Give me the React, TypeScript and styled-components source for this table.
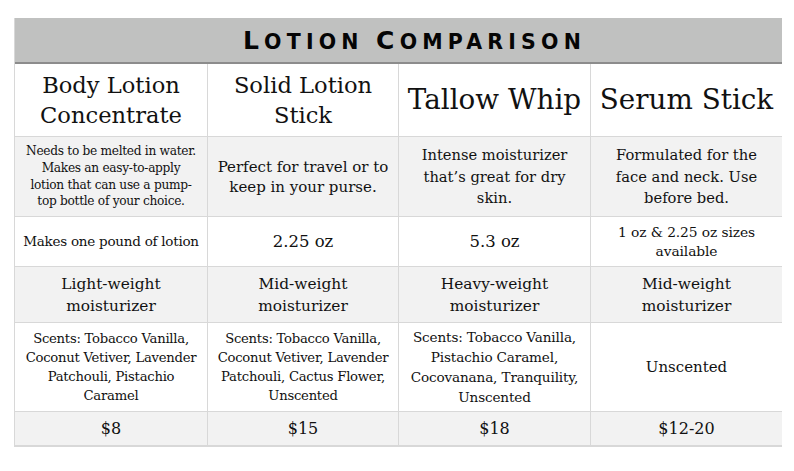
import React from "react";
import styled, { createGlobalStyle } from "styled-components";

const Global = createGlobalStyle`
  html, body { margin: 0; padding: 0; background: #ffffff; }
  body { font-family: "DejaVu Serif", serif; color: #111111; }
`;

const Page = styled.div`
  width: 794px;
  height: 471px;
  padding: 18px 13px 0 14px;
  box-sizing: border-box;
`;

const Table = styled.div`
  display: grid;
  grid-template-columns: 193px 191px 192px 191px;
  grid-template-rows: 46px 73px 80px 50px 56px 89px 34px;
  border-left: 1px solid #d8d8d8;
  border-right: 1px solid #d8d8d8;
  border-bottom: 1px solid #d8d8d8;
  width: 768px;
  box-sizing: border-box;
`;

const TitleBar = styled.div`
  grid-column: 1 / -1;
  background: #c0c1c0;
  border-bottom: 2px solid #8c8c8c;
  display: flex;
  align-items: center;
  justify-content: center;
  padding-left: 32px;
  padding-top: 1px;
`;

const Title = styled.h1`
  margin: 0;
  font-family: "DejaVu Sans", "Liberation Sans", sans-serif;
  font-weight: 700;
  font-size: 20.5px;
  letter-spacing: 5.2px;
  text-transform: uppercase;
  color: #050505;
  line-height: 1;
  white-space: nowrap;
`;

const Initial = styled.span`
  font-size: 25px;
`;

const Cell = styled.div<{ $shade?: boolean; $size: number; $lh?: number; $ls?: number; $last?: boolean }>`
  display: flex;
  align-items: center;
  justify-content: center;
  text-align: center;
  font-family: "DejaVu Serif", serif;
  color: #111111;
  background: ${(p) => (p.$shade ? "#f2f2f2" : "#ffffff")};
  border-right: ${(p) => (p.$last ? "none" : "1px solid #d8d8d8")};
  border-bottom: 1px solid #d8d8d8;
  font-size: ${(p) => p.$size}px;
  line-height: ${(p) => (p.$lh ? `${p.$lh}px` : "1.2")};
  letter-spacing: ${(p) => p.$ls ?? 0}px;
  padding: 0 2px;
  box-sizing: border-box;
  overflow: hidden;
  white-space: nowrap;
`;

type CellData = { text: React.ReactNode; size: number; lh?: number; ls?: number };
type Row = { shade?: boolean; cells: CellData[] };

const rows: Row[] = [
  {
    cells: [
      { text: <>Body Lotion<br />Concentrate</>, size: 22.6, lh: 30 },
      { text: <>Solid Lotion<br />Stick</>, size: 22.6, lh: 30 },
      { text: "Tallow Whip", size: 27.8 },
      { text: "Serum Stick", size: 27.8 },
    ],
  },
  {
    shade: true,
    cells: [
      {
        text: <>Needs to be melted in water.<br />Makes an easy-to-apply<br />lotion that can use a pump-<br />top bottle of your choice.</>,
        size: 12.2,
        lh: 16.7,
        ls: -0.3,
      },
      { text: <>Perfect for travel or to<br />keep in your purse.</>, size: 15, lh: 20 },
      { text: <>Intense moisturizer<br />that’s great for dry<br />skin.</>, size: 14.7, lh: 21.5 },
      { text: <>Formulated for the<br />face and neck. Use<br />before bed.</>, size: 14.7, lh: 21.5 },
    ],
  },
  {
    cells: [
      { text: "Makes one pound of lotion", size: 13.5, ls: -0.25 },
      { text: "2.25 oz", size: 16.5 },
      { text: "5.3 oz", size: 16.5 },
      { text: <>1 oz &amp; 2.25 oz sizes<br />available</>, size: 13.8, lh: 19, ls: -0.1 },
    ],
  },
  {
    shade: true,
    cells: [
      { text: <>Light-weight<br />moisturizer</>, size: 15.4, lh: 22 },
      { text: <>Mid-weight<br />moisturizer</>, size: 15.4, lh: 22 },
      { text: <>Heavy-weight<br />moisturizer</>, size: 15.4, lh: 22 },
      { text: <>Mid-weight<br />moisturizer</>, size: 15.4, lh: 22 },
    ],
  },
  {
    cells: [
      { text: <>Scents: Tobacco Vanilla,<br />Coconut Vetiver, Lavender<br />Patchouli, Pistachio<br />Caramel</>, size: 13.2, lh: 19, ls: -0.25 },
      { text: <>Scents: Tobacco Vanilla,<br />Coconut Vetiver, Lavender<br />Patchouli, Cactus Flower,<br />Unscented</>, size: 13.2, lh: 19, ls: -0.25 },
      { text: <>Scents: Tobacco Vanilla,<br />Pistachio Caramel,<br />Cocovanana, Tranquility,<br />Unscented</>, size: 13.6, lh: 20, ls: -0.15 },
      { text: "Unscented", size: 15 },
    ],
  },
  {
    shade: true,
    cells: [
      { text: "$8", size: 16 },
      { text: "$15", size: 16 },
      { text: "$18", size: 16 },
      { text: "$12-20", size: 16 },
    ],
  },
];

export default function App() {
  return (
    <>
      <Global />
      <Page>
        <Table>
          <TitleBar>
            <Title>
              <Initial>L</Initial>otion <Initial>C</Initial>omparison
            </Title>
          </TitleBar>
          {rows.map((row, ri) =>
            row.cells.map((c, ci) => (
              <Cell
                key={`${ri}-${ci}`}
                $shade={row.shade}
                $size={c.size}
                $lh={c.lh}
                $ls={c.ls}
                $last={ci === 3}
              >
                <span>{c.text}</span>
              </Cell>
            ))
          )}
        </Table>
      </Page>
    </>
  );
}
